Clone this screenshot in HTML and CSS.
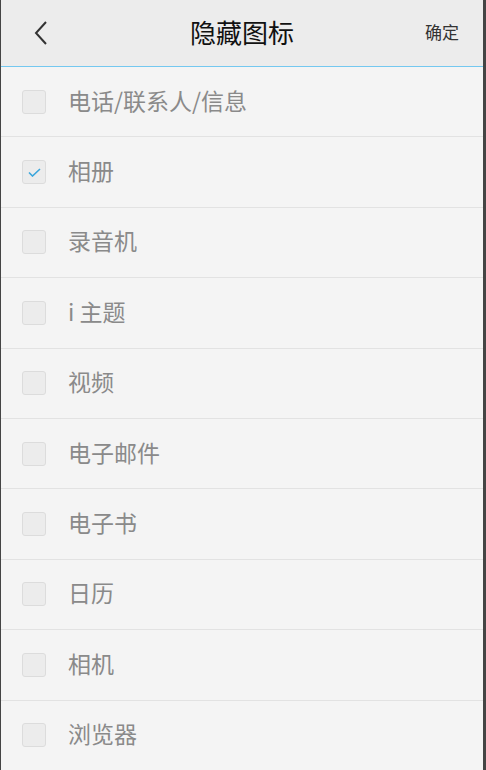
FILE: index.html
```html
<!DOCTYPE html>
<html lang="zh-CN">
<head>
    <meta charset="UTF-8">
    <meta name="viewport" content="width=device-width, initial-scale=1.0">
    <title>隐藏图标</title>
    <link rel="stylesheet" href="styles.css">
</head>
<body>
    <div class="screen">
        <div class="header">
            <span class="back">
                <svg width="14" height="24" viewBox="0 0 14 24"><path d="M12 1 L2 12 L12 23" fill="none" stroke="#333" stroke-width="2"/></svg>
            </span>
            <h1>隐藏图标</h1>
            <span class="ok">确定</span>
        </div>

        <ul class="list">
            <li><span class="box"></span><span class="label">电话/联系人/信息</span></li>
            <li><span class="box"><svg width="13" height="9" viewBox="0 0 13 9"><path d="M1 4.5 L4.5 8 L12 1" fill="none" stroke="#3aa6dc" stroke-width="1.6"/></svg></span><span class="label">相册</span></li>
            <li><span class="box"></span><span class="label">录音机</span></li>
            <li><span class="box"></span><span class="label">i 主题</span></li>
            <li><span class="box"></span><span class="label">视频</span></li>
            <li><span class="box"></span><span class="label">电子邮件</span></li>
            <li><span class="box"></span><span class="label">电子书</span></li>
            <li><span class="box"></span><span class="label">日历</span></li>
            <li><span class="box"></span><span class="label">相机</span></li>
            <li><span class="box"></span><span class="label">浏览器</span></li>
        </ul>
    </div>
</body>
</html>
```

FILE: styles.css
```css
html, body {
    margin: 0;
    padding: 0;
    background: #444;
}
.screen {
    width: 482px;
    height: 770px;
    margin-left: 1px;
    background: #f4f4f4;
    font-family: "Noto Sans CJK SC", "Noto Sans", sans-serif;
    overflow: hidden;
}
.header {
    height: 66px;
    background: #ececec;
    border-bottom: 1px solid #74c8f0;
    display: flex;
    align-items: center;
    position: relative;
}
.back {
    margin-left: 33px;
    display: flex;
    margin-top: -1px;
}
.header h1 {
    position: absolute;
    left: 0;
    right: 0;
    top: 14px;
    margin: 0;
    text-align: center;
    font-size: 26px;
    line-height: 36px;
    font-weight: normal;
    color: #111;
    pointer-events: none;
}
.ok {
    margin-left: auto;
    margin-right: 24px;
    margin-top: -3px;
    font-size: 17px;
    color: #333;
}
.list {
    list-style: none;
    margin: 0;
    padding: 0;
}
.list li {
    height: 70.4px;
    box-sizing: border-box;
    border-bottom: 1px solid #e2e2e2;
    display: flex;
    align-items: center;
    padding-left: 21px;
}
.label {
    font-size: 23px;
    line-height: 30px;
    margin-top: -4px;
    color: #8a8a8a;
}
.box {
    width: 22px;
    height: 22px;
    border: 1px solid #dcdcdc;
    border-radius: 3px;
    background: #ececec;
    margin-right: 22px;
    display: flex;
    align-items: center;
    justify-content: center;
}
```
